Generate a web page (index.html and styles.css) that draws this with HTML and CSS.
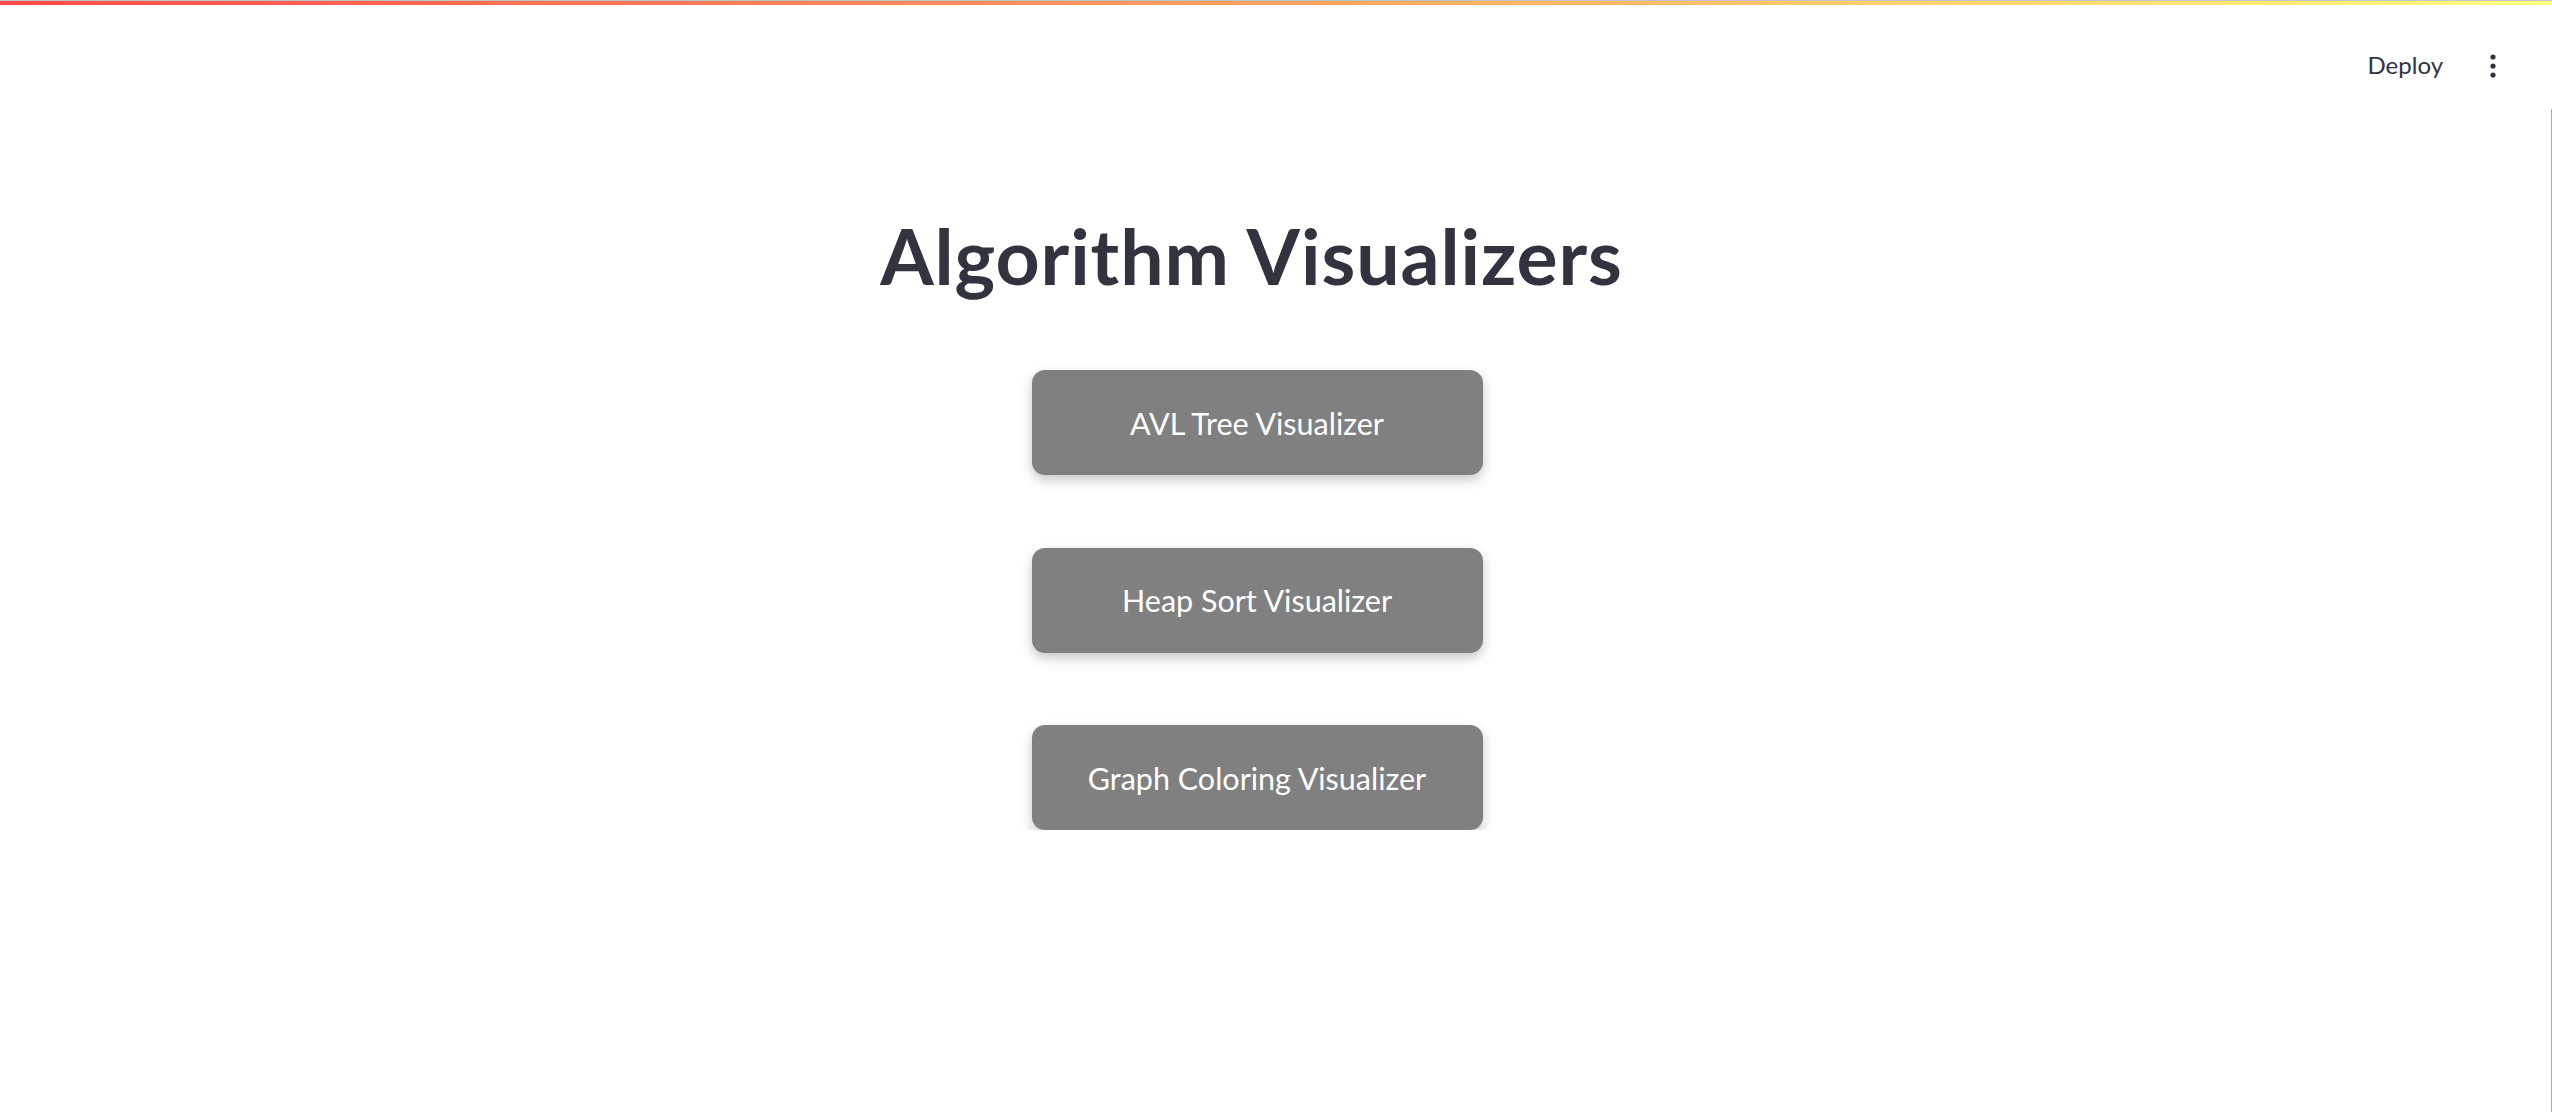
FILE: index.html
```html
<!DOCTYPE html>
<html lang="en">
<head>
<meta charset="utf-8">
<title>Algorithm Visualizers</title>
<link rel="stylesheet" href="styles.css">
</head>
<body>
<div class="decoration"></div>
<header class="app-header">
  <span class="deploy">Deploy</span>
  <span class="kebab" aria-label="Main menu">
    <svg width="6" height="24" viewBox="0 0 6 24"><circle cx="3" cy="3" r="2.6" fill="#31333F"/><circle cx="3" cy="12" r="2.6" fill="#31333F"/><circle cx="3" cy="21" r="2.6" fill="#31333F"/></svg>
  </span>
</header>
<main class="main">
  <h1 class="title">Algorithm Visualizers</h1>
  <div class="buttons">
    <button class="viz-btn">AVL Tree Visualizer</button>
    <button class="viz-btn">Heap Sort Visualizer</button>
    <button class="viz-btn">Graph Coloring Visualizer</button>
  </div>
</main>
<div class="scroll-edge"></div>
</body>
</html>
```
FILE: styles.css
```css
html, body {
  margin: 0;
  padding: 0;
  background: #ffffff;
  font-family: "Lato", "Open Sans", sans-serif;
  color: #31333F;
}

.decoration {
  height: 4px;
  border-top: 1px solid #c4c4c4;
  background: linear-gradient(90deg, #ff4b4b 0%, #ffa25f 50%, #fffd80 100%);
}

.app-header {
  box-sizing: border-box;
  height: 95px;
  padding: 45px 56px 0 0;
  display: flex;
  justify-content: flex-end;
  align-items: flex-start;
}

.deploy {
  font-size: 24px;
  line-height: 30px;
  color: #31333F;
  margin-right: 47px;
}

.kebab {
  display: flex;
  align-items: center;
  height: 30px;
  margin-top: 1px;
}

.kebab svg {
  display: block;
}

.main {
  display: flex;
  flex-direction: column;
  align-items: center;
  padding: 109px 38px 0 0;
}

.title {
  margin: 0 11px 0 0;
  font-size: 77px;
  line-height: 1.2;
  font-weight: 700;
  color: #31333F;
  letter-spacing: 0.9px;
}

.buttons {
  margin-top: 69px;
  display: flex;
  flex-direction: column;
  align-items: center;
  gap: 72.5px;
}

.viz-btn {
  width: 451px;
  height: 105px;
  border: none;
  border-radius: 13px;
  background: #808080;
  color: #ffffff;
  font-family: "Lato", "Open Sans", sans-serif;
  font-size: 30.5px;
  font-weight: 400;
  box-shadow: 0 5px 12px rgba(0, 0, 0, 0.22);
  cursor: pointer;
}

.scroll-edge {
  position: fixed;
  right: 0;
  top: 109px;
  bottom: 0;
  width: 1px;
  background: #a8a8a8;
}
```
